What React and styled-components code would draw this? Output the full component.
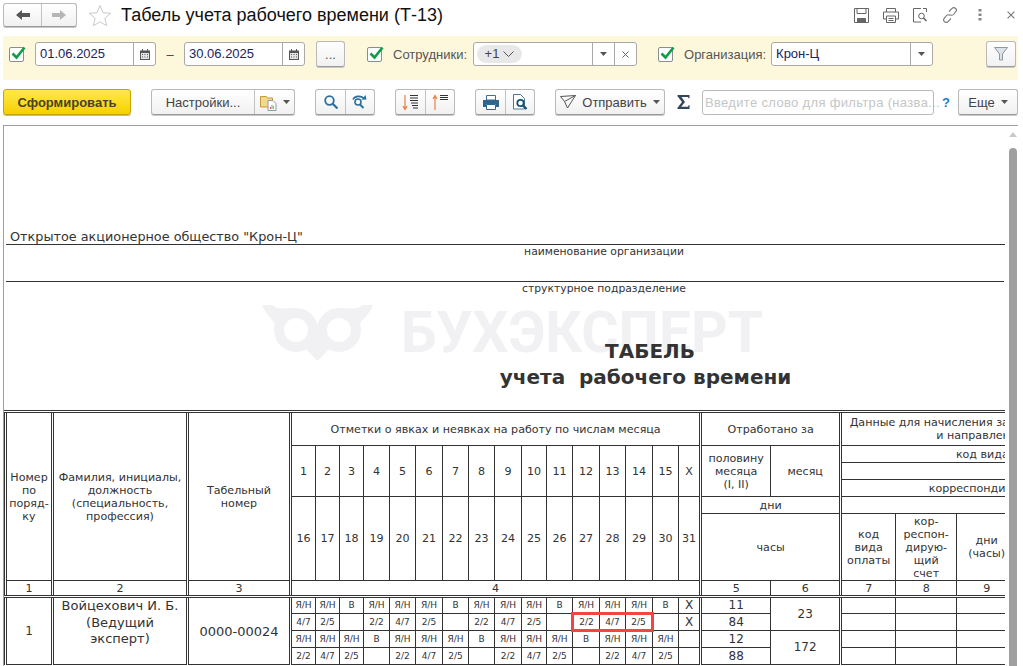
import React from 'react';
import styled, { createGlobalStyle, css } from 'styled-components';

const GlobalStyle = createGlobalStyle`
  html, body { margin: 0; padding: 0; background: #fff; }
  body { font-family: 'Liberation Sans', Arial, sans-serif; font-size: 13px; color: #333; }
`;

const Page = styled.div`
  width: 1023px;
  height: 666px;
  overflow: hidden;
  display: flex;
  flex-direction: column;
`;

/* ---------- window header ---------- */
const Header = styled.header`
  height: 26px;
  padding: 2px 0 0 3px;
  display: flex;
  align-items: center;
`;
const Title = styled.h1`
  margin: 0 0 0 9px;
  font-size: 18px;
  font-weight: 400;
  color: #111;
  flex: 1;
`;
const HeaderTools = styled.div`
  display: flex;
  align-items: center;
  gap: 14px;
  padding-right: 8px;
`;
const DotsBox = styled.span`
  display: flex;
  margin: 0 11px 0 6px;
`;

const Group = styled.div`
  display: flex;
  height: ${(p) => p.$h || 26}px;
  box-sizing: border-box;
  border: 1px solid #b9b9b9;
  border-bottom-color: #9a9a9a;
  border-radius: 3px;
  background: linear-gradient(#fff, #f1f1f1);
  box-shadow: 0 1px 0 #c9c9c9;
`;
const Cell = styled.div`
  width: ${(p) => p.$w}px;
  box-sizing: border-box;
  display: flex;
  align-items: center;
  justify-content: center;
  gap: ${(p) => p.$gap || 0}px;
  color: #444;
  & + & { border-left: 1px solid #c2c2c2; }
`;

const StarBox = styled.div`
  margin-left: 11px;
  display: flex;
`;

/* ---------- filter bar ---------- */
const FilterBar = styled.div`
  margin: 8px 5px 0 3px;
  height: 44px;
  box-sizing: border-box;
  background: #fdf8dc;
  display: flex;
  align-items: center;
  padding: 0 0 8px 6px;
`;
const Check = styled.span`
  position: relative;
  width: 15px;
  height: 15px;
  box-sizing: border-box;
  border: 1px solid #8c8c8c;
  border-radius: 2px;
  background: #fff;
  margin-left: ${(p) => p.$ml || 0}px;
  flex: none;
  svg { position: absolute; left: 0; top: -3px; }
`;
const Field = styled.div`
  display: flex;
  height: 24px;
  width: ${(p) => p.$w}px;
  margin-left: ${(p) => p.$ml || 0}px;
  box-sizing: border-box;
  border: 1px solid #a9a9a9;
  border-radius: 3px;
  background: #fff;
  flex: none;
`;
const FieldText = styled.div`
  flex: 1;
  padding-left: ${(p) => (p.$flush ? 0 : 4)}px;
  line-height: 22px;
  font-size: 13px;
  color: #22225c;
  min-width: 0;
`;
const FieldBtn = styled.div`
  width: ${(p) => p.$w || 21}px;
  border-left: 1px solid #a9a9a9;
  display: flex;
  align-items: center;
  justify-content: center;
  color: #666;
  flex: none;
`;
const Dash = styled.span`
  width: 28px;
  text-align: center;
  flex: none;
  color: #444;
`;
const Label = styled.span`
  margin-left: ${(p) => p.$ml}px;
  color: #555;
  font-size: 13px;
  white-space: nowrap;
`;
const SquareBtn = styled(Group)`
  margin-left: ${(p) => p.$ml}px;
  width: ${(p) => p.$w}px;
  align-items: center;
  justify-content: center;
  color: #555;
  flex: none;
`;
const Pill = styled.span`
  margin: 2px 0 0 3px;
  width: 45px;
  height: 18px;
  border-radius: 9px;
  background: #e8e8e8;
  display: inline-flex;
  align-items: center;
  justify-content: center;
  gap: 4px;
  color: #444;
  font-size: 13px;
`;

/* ---------- command bar ---------- */
const CommandBar = styled.div`
  margin-top: 9px;
  display: flex;
  align-items: center;
  padding-left: 3px;
  height: 26px;
`;
const Primary = styled.button`
  width: 128px;
  height: 26px;
  padding: 0;
  border: 1px solid #c9a400;
  border-radius: 3px;
  background: linear-gradient(#ffe94a, #f8d000);
  box-shadow: 0 1px 0 #b9b9b9;
  font: bold 13px 'Liberation Sans', Arial, sans-serif;
  color: #4a4328;
`;
const Spaced = styled(Group)`
  margin-left: ${(p) => p.$ml}px;
  flex: none;
`;
const SigmaBox = styled.div`
  margin-left: 12px;
  display: flex;
`;
const Search = styled.div`
  margin-left: 12px;
  width: 232px;
  height: 25px;
  box-sizing: border-box;
  border: 1px solid #b9b9b9;
  border-radius: 3px;
  padding-left: 2px;
  line-height: 23px;
  color: #c6c6c6;
  font-size: 13px;
  letter-spacing: 0.33px;
  white-space: nowrap;
`;
const Help = styled.span`
  width: 24px;
  text-align: center;
  font-weight: bold;
  color: #1f7dc0;
`;

/* ---------- sheet ---------- */
const Sheet = styled.section`
  margin: 10px 5px 0 3px;
  flex: 1;
  min-height: 0;
  display: flex;
  border-top: 1px solid #9f9f9f;
  border-left: 1px solid #9f9f9f;
`;
const SheetBody = styled.div`
  position: relative;
  width: 1001px;
  overflow: hidden;
  padding: 103px 0 0 2px;
  box-sizing: border-box;
  font-family: 'DejaVu Sans', Verdana, sans-serif;
  color: #333;
`;
const Scroll = styled.div`
  flex: 1;
  display: flex;
  flex-direction: column;
  align-items: center;
  padding: 6px 0 0 2px;
`;
const ScrollUp = styled.span`
  width: 0;
  height: 0;
  border: 4px solid transparent;
  border-top: 0;
  border-bottom: 5px solid #c9c9c9;
  margin-bottom: 11px;
`;
const Thumb = styled.div`
  flex: 1;
  width: 8px;
  background: #a0a0a0;
  border-radius: 4px 4px 0 0;
`;
const Watermark = styled.div`
  position: absolute;
  left: 258px;
  top: 179px;
  display: flex;
  gap: 27px;
  align-items: center;
  color: #f1f1f3;
  font: bold 57px/56px Roboto, 'Liberation Sans', sans-serif;
  white-space: nowrap;
`;
const Org = styled.div`
  position: relative;
  width: 998px;
  height: 15px;
  border-bottom: 1px solid #333;
  padding-left: 4px;
  font-size: 12.8px;
  line-height: 15px;
`;
const Caption = styled.div`
  position: relative;
  width: 1002px;
  padding-left: 194px;
  box-sizing: border-box;
  text-align: center;
  height: 14px;
  font-size: 10.8px;
  line-height: 14px;
`;
const Rule = styled.div`
  width: 998px;
  height: 22px;
  border-bottom: 1px solid #333;
`;
const DocTitle = styled.div`
  position: relative;
  width: 998px;
  box-sizing: border-box;
  padding-left: ${(p) => p.$pl}px;
  margin-top: ${(p) => p.$mt || 0}px;
  text-align: center;
  font-size: 20px;
  font-weight: bold;
  line-height: 26px;
  height: 26px;
  white-space: pre;
`;

/* ---------- the timesheet table ---------- */
const Table = styled.table`
  position: relative;
  margin: 20px 0 0 -2px;
  table-layout: fixed;
  width: 1165px;
  border-collapse: collapse;
  line-height: 13px;
`;
const Col = styled.col`
  ${(p) => p.$double && css`border-left: 3px double #333;`}
`;
const Row = styled.tr`
  height: ${(p) => p.$h}px;
  ${(p) => p.$top && css`td { border-top: 3px double #333; }`}
  ${(p) => p.$bottom && css`td { border-bottom: 3px double #333; }`}
`;
const hlBorders = {
  left: css`border-left: 3px solid #f44545;`,
  right: css`border-right: 3px solid #f44545;`,
  mid: css``,
};
const Td = styled.td`
  border: 1px solid #333;
  padding: 0;
  text-align: center;
  vertical-align: ${(p) => (p.$top ? 'top' : 'middle')};
  overflow: hidden;
  white-space: nowrap;
  font-size: ${(p) => p.$fs || 11.1}px;
  ${(p) => p.$hl && css`
    border-top: 3px solid #f44545;
    border-bottom: 3px solid #f44545;
    ${hlBorders[p.$hl]}
  `}
`;
const NameLines = styled.div`
  line-height: 16.5px;
  font-size: 13px;
`;

/* ---------- icons ---------- */
const Arrow = ({ dir, color }) => (
  <svg width="14" height="12" viewBox="0 0 14 12">
    <path
      d={dir === 'left' ? 'M0 6 6 1v3h8v4H6v3z' : 'M14 6 8 1v3H0v4h8v3z'}
      fill={color}
    />
  </svg>
);
const Star = () => (
  <svg width="24" height="22" viewBox="0 0 24 22">
    <path d="M12 1.5l3 7.2 7.8.6-6 5 1.9 7.5L12 17.8l-6.7 4 1.9-7.5-6-5 7.8-.6z" fill="none" stroke="#c9c9c9" />
  </svg>
);
const Tick = () => (
  <svg width="17" height="16" viewBox="0 0 17 16">
    <path d="M2.5 8.5 6.5 12.5 14.5 2.5" fill="none" stroke="#0f9d4a" strokeWidth="2.6" />
  </svg>
);
const Calendar = () => (
  <svg width="10" height="11" viewBox="0 0 10 11">
    <path d="M0 1.5h10V11H0z" fill="#555" />
    <path d="M1 4h8v6H1z" fill="#e6e6e6" />
    <path d="M2 5h1v1H2zM4.5 5h1v1h-1zM7 5h1v1H7zM2 7.5h1v1H2zM4.5 7.5h1v1h-1zM7 7.5h1v1H7z" fill="#555" />
    <path d="M2 0h1v2H2zM7 0h1v2H7z" fill="#555" />
  </svg>
);
const Caret = () => (
  <svg width="7" height="4" viewBox="0 0 7 4">
    <path d="M0 0h7L3.5 4z" fill="#555" />
  </svg>
);
const Cross = ({ s = 7, color = '#666' }) => (
  <svg width={s} height={s} viewBox="0 0 7 7">
    <path d="M.5.5l6 6M6.5.5l-6 6" stroke={color} strokeWidth="1" fill="none" />
  </svg>
);
const Funnel = () => (
  <svg width="14" height="14" viewBox="0 0 14 14">
    <path d="M.5.5h13L8.5 7v6h-3V7z" fill="#dbe3e8" stroke="#8c979e" />
  </svg>
);
const SaveIcon = () => (
  <svg width="15" height="15" viewBox="0 0 15 15" fill="none" stroke="#666">
    <path d="M.5.5h14v14H.5z" />
    <path d="M3 .5v5h9v-5" />
    <path d="M3.500 10.500h8v4h-8z" fill="#666" />
  </svg>
);
const PrintIcon = () => (
  <svg width="16" height="15" viewBox="0 0 16 15" fill="none" stroke="#666">
    <path d="M3.500 4V.5h9V4M3.500 11H.5V4h15v7h-3" />
    <path d="M3.500 8h9v6.500h-9zM5.500 10.500h5M5.500 12.500h5" />
  </svg>
);
const PreviewIcon = () => (
  <svg width="15" height="15" viewBox="0 0 15 15" fill="none" stroke="#666">
    <path d="M8 .5H.5v13.500H8M10 .5h3.500V4" />
    <circle cx="8.500" cy="8" r="2.800" />
    <path d="M10.500 10l3 3" strokeWidth="1.600" />
  </svg>
);
const LinkIcon = () => (
  <svg width="16" height="16" viewBox="0 0 16 16" fill="none" stroke="#777" strokeWidth="1.100">
    <path d="M7 4.500l2.800-2.800a2.500 2.500 0 0 1 4 3L11.500 7.500a2.500 2.500 0 0 1-3.700 0" />
    <path d="M9 11.500l-2.800 2.800a2.500 2.500 0 0 1-4-3L4.500 8.500a2.500 2.500 0 0 1 3.700 0" />
  </svg>
);
const Dots = () => (
  <svg width="4" height="12" viewBox="0 0 4 12">
    <path d="M.5 0h3v2.500h-3zM.5 4.500h3V7h-3zM.5 9h3v2.500h-3z" fill="#888" />
  </svg>
);
const FolderIcon = () => (
  <svg width="17" height="17" viewBox="0 0 17 17">
    <path d="M.5 2.500h6l1 1.500h5v9H.5z" fill="#f3d98b" stroke="#c49a3a" />
    <path d="M8 6.500h5l3 3v7H8z" fill="#fff" stroke="#8e9aa3" />
    <path d="M10 15v-2h1v2z" fill="#d9534f" />
    <path d="M11.500 15v-4h1v4z" fill="#5cb05c" />
    <path d="M13 15v-3h1v3z" fill="#e0a030" />
  </svg>
);
const SearchIcon = () => (
  <svg width="14" height="14" viewBox="0 0 14 14" fill="none" stroke="#2b6f9f" strokeWidth="1.800">
    <circle cx="5.500" cy="5.500" r="4.300" />
    <path d="M8.500 8.500l5 5" strokeWidth="2.200" />
  </svg>
);
const SearchAgainIcon = () => (
  <svg width="16" height="14" viewBox="0 0 16 14" fill="none" stroke="#2b6f9f" strokeWidth="1.600">
    <circle cx="6" cy="7" r="3" />
    <path d="M8 9.500l3.500 3.500" strokeWidth="2" />
    <path d="M1 4.500C3 0.500 9 0.500 12 3.500" />
    <path d="M9.500 4.800l5-.3L13.500 0z" fill="#2b6f9f" stroke="none" />
  </svg>
);
const SortIcon = ({ up }) => (
  <svg width="17" height="17" viewBox="0 0 17 17">
    <path
      d={up ? 'M3 16V3M1 5l2-3.500L5 5' : 'M3 1v14M1 12l2 3.500L5 12'}
      fill="none"
      stroke="#ee7f3f"
      strokeWidth="1.200"
    />
    <path
      d={up ? 'M8 1h8v1H8zM8 3h8v1H8zM8 5h8v1H8z' : 'M8 1h8v1H8zM8 3.500h8v1H8zM8 6h8v1H8zM9 8.500h7v1H9zM10 11h6v1h-6zM11 13.500h5v1h-5z'}
      fill="#333"
    />
  </svg>
);
const PrintBlue = () => (
  <svg width="16" height="15" viewBox="0 0 16 15">
    <path d="M3.500.5h9V5h-9z" fill="#fff" stroke="#3f6f94" />
    <path d="M0 5h16v7h-3V9H3v3H0z" fill="#33648a" />
    <path d="M3.500 9.500h9v5h-9z" fill="#fff" stroke="#33648a" />
  </svg>
);
const DocSearch = () => (
  <svg width="15" height="16" viewBox="0 0 15 16">
    <path d="M.5.5h7l4 4v10.500h-11z" fill="#fff" stroke="#4d7696" />
    <circle cx="7.500" cy="9" r="3.200" fill="#fff" stroke="#15507d" strokeWidth="1.800" />
    <path d="M10 11.500l3.500 3.500" stroke="#15507d" strokeWidth="2.400" />
  </svg>
);
const SendIcon = () => (
  <svg width="16" height="14" viewBox="0 0 16 14" fill="none" stroke="#555">
    <path d="M.5 1.500l15-1-8 12.500-3-6.500zM4.500 6.500l11-6" />
  </svg>
);
const SigmaIcon = () => (
  <svg width="13" height="14" viewBox="0 0 13 14">
    <path d="M.5 0H12.500v3.200h-1L11 2H4.500L8 7l-3.800 4.800H11l.6-1.500h1L12.500 14H.5v-1.300L5 7 .5 1.300z" fill="#33475b" />
  </svg>
);
const ChevronDown = () => (
  <svg width="11" height="6" viewBox="0 0 11 6" fill="none" stroke="#555">
    <path d="M.5.5l5 5 5-5" />
  </svg>
);
const Owl = () => (
  <svg width="112" height="56" viewBox="0 0 112 56" fill="#f1f1f3">
    <path d="M0 0H10.700C15 5 22 3 34 3L14 20C9 13 3 8 0 0z" />
    <path d="M111 0H100.300C96 5 89 3 77 3L97 20C102 13 108 8 111 0z" />
    <path d="M40 40L55.500 56 71 40 55.500 20z" />
    <circle cx="34" cy="25" r="17" fill="none" stroke="#f1f1f3" strokeWidth="10" />
    <circle cx="77" cy="25" r="17" fill="none" stroke="#f1f1f3" strokeWidth="10" />
  </svg>
);

/* ---------- data ---------- */
const dayWidths = [25, 24, 24, 26, 26, 27, 26, 26, 27, 25, 26, 27, 26, 27, 26, 22];
const firstHalf = ['1', '2', '3', '4', '5', '6', '7', '8', '9', '10', '11', '12', '13', '14', '15', 'Х'];
const secondHalf = ['16', '17', '18', '19', '20', '21', '22', '23', '24', '25', '26', '27', '28', '29', '30', '31'];
const rows = [
  {
    cells: ['Я/Н', 'Я/Н', 'В', 'Я/Н', 'Я/Н', 'Я/Н', 'В', 'Я/Н', 'Я/Н', 'Я/Н', 'В', 'Я/Н', 'Я/Н', 'Я/Н', 'В', 'Х'],
    days: '11',
    month: '23',
  },
  {
    cells: ['4/7', '2/5', '', '2/2', '4/7', '2/5', '', '2/2', '4/7', '2/5', '', '2/2', '4/7', '2/5', '', 'Х'],
    days: '84',
    marks: { 11: 'left', 12: 'mid', 13: 'right' },
  },
  {
    cells: ['Я/Н', 'Я/Н', 'Я/Н', 'В', 'Я/Н', 'Я/Н', 'Я/Н', 'В', 'Я/Н', 'Я/Н', 'Я/Н', 'В', 'Я/Н', 'Я/Н', 'Я/Н', ''],
    days: '12',
    month: '172',
  },
  {
    cells: ['2/2', '4/7', '2/5', '', '2/2', '4/7', '2/5', '', '2/2', '4/7', '2/5', '', '2/2', '4/7', '2/5', ''],
    days: '88',
  },
];

const TimesheetTable = () => (
  <Table>
    <colgroup>
      <Col style={{ width: 47 }} $double />
      <Col style={{ width: 135 }} $double />
      <Col style={{ width: 103 }} $double />
      {dayWidths.map((w, i) => (
        <Col key={i} style={{ width: w }} $double={i === 0} />
      ))}
      <Col style={{ width: 70 }} $double />
      <Col style={{ width: 70 }} />
      <Col style={{ width: 55 }} $double />
      <Col style={{ width: 61 }} />
      <Col style={{ width: 60 }} />
      <Col style={{ width: 153 }} />
    </colgroup>
    <tbody>
      <Row $h={34} $top>
        <Td rowSpan={6}>Номер<br />по<br />поряд-<br />ку</Td>
        <Td rowSpan={6}>Фамилия, инициалы,<br />должность<br />(специальность,<br />профессия)</Td>
        <Td rowSpan={6}>Табельный<br />номер</Td>
        <Td colSpan={16}>Отметки о явках и неявках на работу по числам месяца</Td>
        <Td colSpan={2}>Отработано за</Td>
        <Td colSpan={4}>Данные для начисления заработной платы по видам<br />и направлениям затрат</Td>
      </Row>
      <Row $h={17}>
        {firstHalf.map((d) => (
          <Td key={d} rowSpan={3}>{d}</Td>
        ))}
        <Td rowSpan={3}>половину<br />месяца<br />(I, II)</Td>
        <Td rowSpan={3}>месяц</Td>
        <Td colSpan={4}>код вида оплаты</Td>
      </Row>
      <Row $h={17}>
        <Td colSpan={4} />
      </Row>
      <Row $h={17}>
        <Td colSpan={4}>корреспондирующий счет</Td>
      </Row>
      <Row $h={17}>
        {secondHalf.map((d) => (
          <Td key={d} rowSpan={2}>{d}</Td>
        ))}
        <Td colSpan={2}>дни</Td>
        <Td colSpan={4} />
      </Row>
      <Row $h={67}>
        <Td colSpan={2}>часы</Td>
        <Td>код<br />вида<br />оплаты</Td>
        <Td>кор-<br />респон-<br />дирую-<br />щий<br />счет</Td>
        <Td>дни<br />(часы)</Td>
        <Td />
      </Row>
      <Row $h={16} $bottom>
        {['1', '2', '3'].map((n) => (
          <Td key={n}>{n}</Td>
        ))}
        <Td colSpan={16}>4</Td>
        {['5', '6', '7', '8', '9', ''].map((n) => (
          <Td key={n}>{n}</Td>
        ))}
      </Row>
      {rows.map((row, r) => (
        <Row key={r} $h={17}>
          {r === 0 && (
            <>
              <Td rowSpan={4} $fs={12}>1</Td>
              <Td rowSpan={4} $top>
                <NameLines>Войцехович И. Б.<br />(Ведущий<br />эксперт)</NameLines>
              </Td>
              <Td rowSpan={4} $fs={13}>0000-00024</Td>
            </>
          )}
          {row.cells.map((c, i) => (
            <Td key={i} $fs={c === 'Х' ? 12 : 9} $hl={row.marks && row.marks[i]}>{c}</Td>
          ))}
          <Td $fs={12}>{row.days}</Td>
          {row.month && <Td rowSpan={2} $fs={12}>{row.month}</Td>}
          <Td />
          <Td />
          <Td />
          <Td />
        </Row>
      ))}
    </tbody>
  </Table>
);

const App = () => (
  <Page>
    <GlobalStyle />
    <Header>
      <Group $h={24}>
        <Cell $w={37}><Arrow dir="left" color="#555" /></Cell>
        <Cell $w={35}><Arrow dir="right" color="#b5b5b5" /></Cell>
      </Group>
      <StarBox><Star /></StarBox>
      <Title>Табель учета рабочего времени (Т-13)</Title>
      <HeaderTools>
        <SaveIcon />
        <PrintIcon />
        <PreviewIcon />
        <LinkIcon />
        <DotsBox><Dots /></DotsBox>
        <Cross s={8} color="#777" />
      </HeaderTools>
    </Header>

    <FilterBar>
      <Check><Tick /></Check>
      <Field $w={121} $ml={11}>
        <FieldText>01.06.2025</FieldText>
        <FieldBtn><Calendar /></FieldBtn>
      </Field>
      <Dash>–</Dash>
      <Field $w={121}>
        <FieldText>30.06.2025</FieldText>
        <FieldBtn><Calendar /></FieldBtn>
      </Field>
      <SquareBtn $w={29} $ml={11}>...</SquareBtn>
      <Check $ml={22}><Tick /></Check>
      <Label $ml={11}>Сотрудники:</Label>
      <Field $w={164} $ml={6}>
        <FieldText $flush>
          <Pill>+1 <ChevronDown /></Pill>
        </FieldText>
        <FieldBtn><Caret /></FieldBtn>
        <FieldBtn><Cross /></FieldBtn>
      </Field>
      <Check $ml={21}><Tick /></Check>
      <Label $ml={11}>Организация:</Label>
      <Field $w={162} $ml={5}>
        <FieldText>Крон-Ц</FieldText>
        <FieldBtn><Caret /></FieldBtn>
      </Field>
      <SquareBtn $w={30} $ml={53}><Funnel /></SquareBtn>
    </FilterBar>

    <CommandBar>
      <Primary>Сформировать</Primary>
      <Spaced $ml={20}>
        <Cell $w={102}>Настройки...</Cell>
        <Cell $w={40} $gap={6}><FolderIcon /><Caret /></Cell>
      </Spaced>
      <Spaced $ml={20}>
        <Cell $w={29}><SearchIcon /></Cell>
        <Cell $w={29}><SearchAgainIcon /></Cell>
      </Spaced>
      <Spaced $ml={20}>
        <Cell $w={29}><SortIcon /></Cell>
        <Cell $w={29}><SortIcon up /></Cell>
      </Spaced>
      <Spaced $ml={20}>
        <Cell $w={29}><PrintBlue /></Cell>
        <Cell $w={29}><DocSearch /></Cell>
      </Spaced>
      <Spaced $ml={20}>
        <Cell $w={108} $gap={6}><SendIcon />Отправить<Caret /></Cell>
      </Spaced>
      <SigmaBox><SigmaIcon /></SigmaBox>
      <Search>Введите слово для фильтра (назва...</Search>
      <Help>?</Help>
      <Spaced $ml={0}>
        <Cell $w={58} $gap={6}>Еще<Caret /></Cell>
      </Spaced>
    </CommandBar>

    <Sheet>
      <SheetBody>
        <Watermark><Owl />БУХЭКСПЕРТ</Watermark>
        <Org>Открытое акционерное общество "Крон-Ц"</Org>
        <Caption>наименование организации</Caption>
        <Rule />
        <Caption>структурное подразделение</Caption>
        <DocTitle $pl={290} $mt={42}>ТАБЕЛЬ</DocTitle>
        <DocTitle $pl={281}>учета  рабочего времени</DocTitle>
        <TimesheetTable />
      </SheetBody>
      <Scroll>
        <ScrollUp />
        <Thumb />
      </Scroll>
    </Sheet>
  </Page>
);

export default App;
